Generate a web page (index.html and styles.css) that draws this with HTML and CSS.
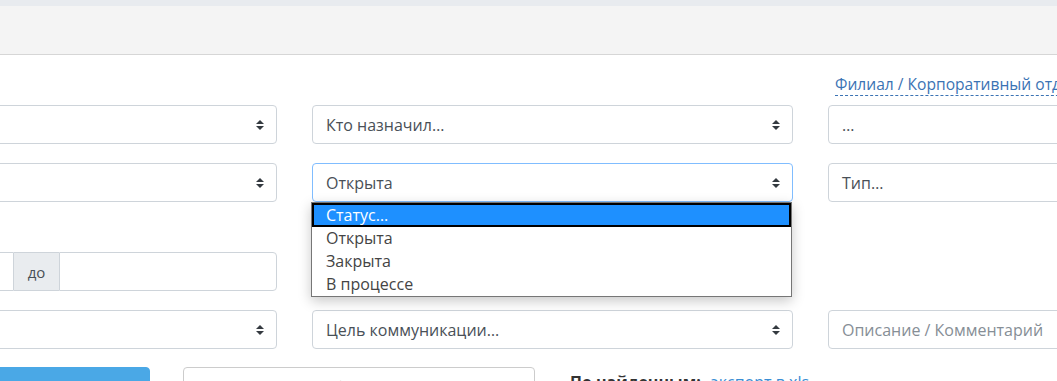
FILE: index.html
```html
<!DOCTYPE html>
<html lang="ru">
<head>
<meta charset="utf-8">
<title>Фильтр</title>
<link rel="stylesheet" href="styles.css">
</head>
<body>
<div class="topstrip"></div>
<div class="header"></div>
<main class="main">
  <div class="grid">
    <div class="cell"></div>
    <div class="cell"></div>
    <div class="cell linkcell"><a class="dashed" href="#">Филиал / Корпоративный отдел</a></div>

    <div class="select"><span></span></div>
    <div class="select"><span>Кто назначил…</span></div>
    <div class="select"><span>…</span></div>

    <div class="select"><span></span></div>
    <div class="select-wrap">
      <div class="select focus"><span>Открыта</span></div>
      <ul class="dropdown">
        <li class="opt active">Статус…</li>
        <li class="opt">Открыта</li>
        <li class="opt">Закрыта</li>
        <li class="opt">В процессе</li>
      </ul>
    </div>
    <div class="select"><span>Тип…</span></div>

    <div class="group row3">
      <div class="input"></div>
      <div class="addon">до</div>
      <div class="input"></div>
    </div>
    <div class="cell row3"></div>
    <div class="cell row3"></div>

    <div class="select"><span></span></div>
    <div class="select"><span>Цель коммуникации…</span></div>
    <div class="input text placeholder">Описание / Комментарий</div>
  </div>
  <div class="actions">
    <button class="btn primary">Найти</button>
    <button class="btn light">Обновить</button>
    <div class="export"><b>По найденным:</b> <a href="#">экспорт в xls</a></div>
  </div>
</main>
</body>
</html>
```

FILE: styles.css
```css
* { box-sizing: border-box; }
html, body { margin: 0; padding: 0; }
body {
  font-family: "Open Sans", "Liberation Sans", sans-serif;
  font-size: 16px;
  color: #495057;
  background: #fff;
  overflow: hidden;
  height: 381px;
}
.topstrip { height: 6px; background: #e8ebef; }
.header { height: 49px; background: #f4f4f4; border-bottom: 1px solid #d6d6d6; }
.main { padding-top: 18px; }
.grid {
  display: grid;
  grid-template-columns: 481px 481px 481px;
  column-gap: 35px;
  row-gap: 19px;
  margin-left: -204px;
  width: 1513px;
}
.grid > .cell:nth-child(-n+3) { margin-bottom: -10px; }
.linkcell { height: 23px; padding-left: 7px; }
.dashed {
  color: #3b73b4;
  text-decoration: none;
  border-bottom: 1px dashed #3b73b4;
  font-size: 15.6px;
  line-height: 21px;
  white-space: nowrap;
}
.select, .input {
  height: 39px;
  border: 1px solid #ced4da;
  border-radius: 4px;
  background: #fff;
  display: flex;
  align-items: center;
  padding: 0 13px;
  position: relative;
}
.select::after {
  content: "";
  position: absolute;
  right: 12px;
  top: 50%;
  width: 8px;
  height: 10px;
  margin-top: -5px;
  background: url("data:image/svg+xml,%3csvg xmlns='http://www.w3.org/2000/svg' viewBox='0 0 4 5'%3e%3cpath fill='%23343a40' d='M2 0L0 2h4zm0 5L0 3h4z'/%3e%3c/svg%3e") no-repeat center / 8px 10px;
}
.select.focus { border-color: #80bdff; }
.select-wrap { position: relative; }
.dropdown {
  position: absolute;
  left: -1px;
  top: 39px;
  width: 481px;
  margin: 0;
  padding: 0;
  list-style: none;
  background: #fff;
  border: 1px solid #767676;
  box-shadow: 0 4px 12px rgba(0,0,0,0.22);
  z-index: 5;
}
.opt {
  height: 23px;
  line-height: 23px;
  padding-left: 14px;
  color: #444;
  font-size: 16px;
}
.opt.active {
  height: 24px;
  line-height: 24px;
  background: #1e90ff;
  color: #fff;
  box-shadow: inset 0 0 0 2px #000;
}
.row3 { margin-top: 31px; }
.group { display: flex; height: 39px; }
.group .input { flex: 1; }
.group .input:first-child { border-radius: 4px 0 0 4px; border-right: 1px solid #ced4da; }
.group .input:last-child { border-radius: 0 4px 4px 0; border-left: 1px solid #ced4da; }
.addon {
  width: 45px;
  flex: none;
  background: #e9ecef;
  border: 1px solid #ced4da;
  border-left: none;
  border-right: none;
  display: flex;
  align-items: center;
  justify-content: center;
  font-size: 15px;
}
.placeholder { color: #868e96; }
.actions {
  display: flex;
  align-items: flex-start;
  margin-top: 18px;
  margin-left: -300px;
}
.btn {
  font-family: inherit;
  font-size: 16px;
  height: 40px;
  border-radius: 4px;
  padding: 4px 12px;
  line-height: 22px;
}
.primary {
  width: 450px;
  background: #4aa8e6;
  border: 1px solid #4aa8e6;
  color: #fff;
}
.light {
  width: 352px;
  margin-left: 33px;
  background: #fff;
  border: 1px solid #ccc;
  color: #333;
}
.export {
  margin-left: 35px;
  padding-top: 4px;
  font-size: 16px;
  color: #333;
}
.export b { color: #333; }
.export a { color: #3b8ed4; text-decoration: none; margin-left: 6px; }
```
